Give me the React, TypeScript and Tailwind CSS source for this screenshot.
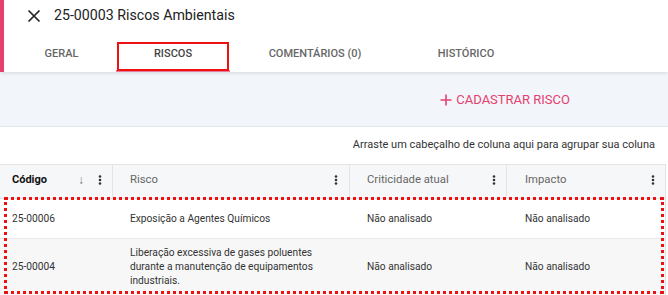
import React from "react";

const Dots = ({ className = "" }: { className?: string }) => (
  <svg width="4" height="12" viewBox="0 0 4 12" className={className}>
    <circle cx="2" cy="2.5" r="1.3" fill="#333" />
    <circle cx="2" cy="6" r="1.3" fill="#333" />
    <circle cx="2" cy="9.5" r="1.3" fill="#333" />
  </svg>
);

export default function App() {
  return (
    <div className="relative w-[668px] h-[295px] overflow-hidden bg-white font-['Roboto',sans-serif]">
      {/* Header */}
      <div className="relative z-10 flex h-[72px] shadow-[0_1px_4px_rgba(0,0,0,0.12)]">
        <div className="w-[4px] bg-[#e6406f]" />
        <div className="flex-1 bg-white flex flex-col">
          <div className="h-[36px] flex items-center pl-[23px] pb-[5px]">
            <svg width="14" height="14" viewBox="0 0 14 14" className="mr-[13px]">
              <path d="M1.5 1.5 L12.5 12.5 M12.5 1.5 L1.5 12.5" stroke="#222" strokeWidth="1.7" />
            </svg>
            <span className="text-[14.2px] text-[#222] leading-none">25-00003 Riscos Ambientais</span>
          </div>
          <div className="flex h-[36px] pl-[2px] text-[11px] font-medium">
            <div className="w-[111px] flex items-center justify-center text-[#666]">GERAL</div>
            <div className="w-[112px] flex items-center justify-center text-[#444] relative">
              RISCOS
              <div className="absolute left-[-1px] right-[-1px] bottom-0 h-[2px] bg-[#e97b9d]" />
            </div>
            <div className="w-[172px] flex items-center justify-center text-[#666]">COMENTÁRIOS (0)</div>
            <div className="w-[130px] flex items-center justify-center text-[#666]">HISTÓRICO</div>
          </div>
        </div>
      </div>

      {/* Toolbar */}
      <div className="h-[55px] bg-[#f2f6fa] border-b border-[#e3e6e9] flex items-center justify-end pr-[98px]">
        <div className="flex items-center gap-[4px] text-[#e6406f] text-[13px] pt-[2px]">
          <svg width="12" height="12" viewBox="0 0 12 12">
            <path d="M6 0.5 V11.5 M0.5 6 H11.5" stroke="#e6406f" strokeWidth="1.6" />
          </svg>
          <span>CADASTRAR RISCO</span>
        </div>
      </div>

      {/* Group panel */}
      <div className="h-[37px] flex items-center justify-end pr-[13px] text-[11px] text-[#333]">
        Arraste um cabeçalho de coluna aqui para agrupar sua coluna
      </div>

      {/* Table */}
      <div className="w-[666px] border-t border-r border-[#e4e4e4] text-[10.2px]">
        <div className="flex h-[34px] bg-[#f6f7f8] border-b border-[#e4e4e4]">
          <div className="w-[113px] border-r border-[#e4e4e4] flex items-center pl-[12px] pr-[10px] pb-[3px]">
            <span className="font-bold text-[11px] text-[#111] flex-1">Código</span>
            <span className="text-[#777] text-[12px] mr-[14px]">↓</span>
            <Dots />
          </div>
          <div className="w-[237px] border-r border-[#e4e4e4] flex items-center pl-[17px] pr-[11px] pb-[3px]">
            <span className="text-[11.3px] text-[#666] flex-1">Risco</span>
            <Dots />
          </div>
          <div className="w-[157px] border-r border-[#e4e4e4] flex items-center pl-[17px] pr-[10px] pb-[3px]">
            <span className="text-[11.3px] text-[#666] flex-1">Criticidade atual</span>
            <Dots />
          </div>
          <div className="flex-1 flex items-center pl-[18px] pr-[10px] pb-[3px]">
            <span className="text-[11.3px] text-[#666] flex-1">Impacto</span>
            <Dots />
          </div>
        </div>
        <div className="flex h-[40px] bg-white border-b border-[#eaeaea] text-[#333] items-center">
          <div className="w-[113px] pl-[12px]">25-00006</div>
          <div className="w-[237px] pl-[17px]">Exposição a Agentes Químicos</div>
          <div className="w-[157px] pl-[17px]">Não analisado</div>
          <div className="flex-1 pl-[18px]">Não analisado</div>
        </div>
        <div className="flex h-[56px] bg-[#f7f7f7] text-[#333] items-center">
          <div className="w-[113px] pl-[12px]">25-00004</div>
          <div className="w-[237px] pl-[17px] pr-[30px] leading-[14px]">
            Liberação excessiva de gases poluentes durante a manutenção de equipamentos industriais.
          </div>
          <div className="w-[157px] pl-[17px]">Não analisado</div>
          <div className="flex-1 pl-[18px]">Não analisado</div>
        </div>
      </div>

      {/* Annotations */}
      <div className="absolute left-[117px] top-[42px] w-[112px] h-[29px] border-2 border-[#ee1111] z-20 pointer-events-none" />
      <div className="absolute left-[4px] top-[197px] w-[660px] h-[97px] border-[3px] border-dotted border-[#ee1111] z-20 pointer-events-none" />
    </div>
  );
}
